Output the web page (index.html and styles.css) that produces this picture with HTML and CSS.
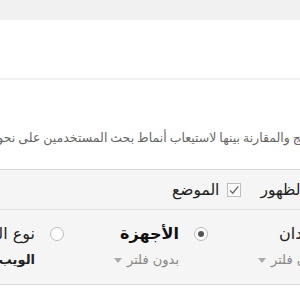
FILE: index.html
```html
<!DOCTYPE html>
<html lang="ar" dir="rtl">
<head>
<meta charset="utf-8">
<link rel="stylesheet" href="styles.css">
</head>
<body>
<div class="topbar"></div>
<div class="intro"></div>
<div class="sep"></div>
<div class="desc">
  <p class="desc-text">النتائج والمقارنة بينها لاستيعاب أنماط بحث المستخدمين على نحو أفضل.</p>
</div>
<div class="metrics">
  <div class="checks">
    <label class="check">
      <svg class="box" width="14" height="14" viewBox="0 0 14 14"><rect x="0.5" y="0.5" width="13" height="13" fill="#fafafa" stroke="#bdbdbd"/><path d="M3 7.4 L5.8 10.2 L11.2 3.4" fill="none" stroke="#666" stroke-width="1.3"/></svg>
      <span class="check-label">نسبة النقر إلى الظهور</span>
    </label>
    <label class="check">
      <svg class="box" width="14" height="14" viewBox="0 0 14 14"><rect x="0.5" y="0.5" width="13" height="13" fill="#fafafa" stroke="#bdbdbd"/><path d="M3 7.4 L5.8 10.2 L11.2 3.4" fill="none" stroke="#666" stroke-width="1.3"/></svg>
      <span class="check-label">الموضع</span>
    </label>
  </div>
  <div class="filters">
    <div class="col">
      <span class="radio"></span>
      <div class="col-body">
        <div class="col-title">البلدان</div>
        <div class="col-sub"><span>بدون فلتر</span><span class="caret"></span></div>
      </div>
    </div>
    <div class="col">
      <span class="radio on"></span>
      <div class="col-body">
        <div class="col-title strong">الأجهزة</div>
        <div class="col-sub"><span>بدون فلتر</span><span class="caret"></span></div>
      </div>
    </div>
    <div class="col">
      <span class="radio"></span>
      <div class="col-body">
        <div class="col-title">نوع البحث</div>
        <div class="col-sub value"><span>الويب</span><span class="caret"></span></div>
      </div>
    </div>
  </div>
</div>
</body>
</html>
```
FILE: styles.css
```css
html { direction: rtl; }
body {
  margin: 0;
  width: 300px;
  height: 300px;
  overflow: hidden;
  background: #fff;
  font-family: "DejaVu Sans", "Noto Sans", sans-serif;
  color: #222;
}
.topbar { height: 20px; background: #f1f1f1; }
.intro { height: 58px; }
.sep { height: 2px; background: #f0f0f0; }
.desc { height: 89px; padding-top: 48px; box-sizing: border-box; }
.desc-text {
  margin: 0 -23px 0 0;
  white-space: nowrap;
  font-size: 12.5px;
  word-spacing: -1px;
  line-height: 20px;
  color: #666;
}
.metrics {
  border-top: 1px solid #dadada;
  background: #f5f5f5;
}
.checks {
  height: 39px;
  display: flex;
  align-items: center;
  justify-content: flex-end;
  gap: 19px;
  padding-left: 172px;
  border-bottom: 1px solid #e0e0e0;
}
.check {
  display: flex;
  align-items: center;
  gap: 8px;
  flex-shrink: 0;
  white-space: nowrap;
}
.box { display: block; flex-shrink: 0; }
.check-label { font-size: 15.5px; line-height: 20px; color: #222; }
.filters {
  display: flex;
  height: 74px;
  margin-right: -52px;
  border-bottom: 1px solid #dcdcdc;
}
.col {
  width: 144px;
  flex-shrink: 0;
  display: flex;
  align-items: flex-start;
  gap: 15px;
  padding-top: 14px;
  box-sizing: border-box;
  white-space: nowrap;
}
.radio {
  width: 14px;
  height: 14px;
  margin-top: 3px;
  flex-shrink: 0;
  box-sizing: border-box;
  border: 1px solid #bbb;
  border-radius: 50%;
  background: #fff;
  display: flex;
  align-items: center;
  justify-content: center;
}
.radio.on::after {
  content: "";
  width: 6px;
  height: 6px;
  border-radius: 50%;
  background: #555;
}
.col-title { font-size: 16px; line-height: 20px; color: #222; }
.col-title.strong { font-weight: bold; color: #111; }
.col-sub {
  margin-top: 6px;
  display: flex;
  align-items: center;
  gap: 5px;
  font-size: 13px;
  line-height: 20px;
  color: #888;
}
.col-sub.value { color: #222; font-weight: bold; }
.caret {
  width: 0;
  height: 0;
  border-left: 4px solid transparent;
  border-right: 4px solid transparent;
  border-top: 5px solid #aaa;
}
```
